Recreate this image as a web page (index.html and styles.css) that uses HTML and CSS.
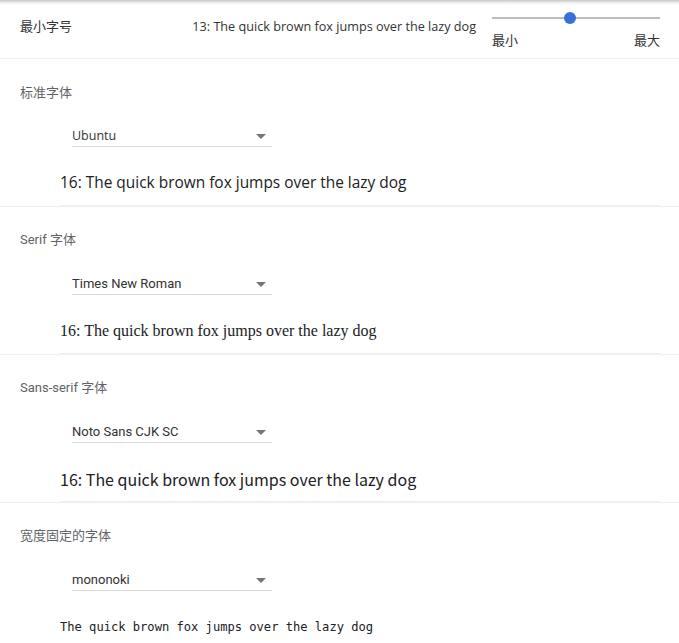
FILE: index.html
```html
<!DOCTYPE html>
<html lang="zh">
<head>
<meta charset="utf-8">
<link rel="stylesheet" href="styles.css">
</head>
<body>
<div class="page">
  <div class="toprow">
    <div class="toplabel">最小字号</div>
    <div class="topsample">13: The quick brown fox jumps over the lazy dog</div>
    <div class="slider">
      <div class="track"><div class="knob"></div></div>
      <div class="ticks"><span>最小</span><span>最大</span></div>
    </div>
  </div>

  <div class="section ubuntu">
    <div class="label">标准字体</div>
    <div class="select"><span class="seltext">Ubuntu</span><span class="arrow"></span></div>
    <div class="sample s-std">16: The quick brown fox jumps over the lazy dog</div>
  </div>

  <div class="section roboto">
    <div class="label">Serif 字体</div>
    <div class="select"><span class="seltext">Times New Roman</span><span class="arrow"></span></div>
    <div class="sample s-serif">16: The quick brown fox jumps over the lazy dog</div>
  </div>

  <div class="section roboto">
    <div class="label">Sans-serif 字体</div>
    <div class="select"><span class="seltext">Noto Sans CJK SC</span><span class="arrow"></span></div>
    <div class="sample s-sans">16: The quick brown fox jumps over the lazy dog</div>
  </div>

  <div class="section roboto">
    <div class="label">宽度固定的字体</div>
    <div class="select"><span class="seltext">mononoki</span><span class="arrow"></span></div>
    <div class="sample s-mono">The quick brown fox jumps over the lazy dog</div>
  </div>
</div>
</body>
</html>
```
FILE: styles.css
```css
html, body {
  margin: 0;
  padding: 0;
  background: #fff;
}
body {
  width: 679px;
  height: 643px;
  overflow: hidden;
  background: linear-gradient(to bottom, rgba(0,0,0,0.22), rgba(0,0,0,0.06) 3px, rgba(0,0,0,0) 5px) no-repeat #fff;
  font-family: "Open Sans", "Noto Sans CJK SC", sans-serif;
  color: #333;
}
.page {
  display: flex;
  flex-direction: column;
}
.toprow {
  height: 58px;
  display: flex;
  align-items: flex-start;
  padding: 0 19px 0 20px;
  font-family: "Open Sans", "Noto Sans CJK SC", sans-serif;
}
.toplabel {
  flex: 1;
  font-size: 13px;
  line-height: 20px;
  margin-top: 16px;
  color: #333;
}
.topsample {
  font-size: 12.65px;
  line-height: 20px;
  margin-top: 16px;
  color: #333;
  white-space: nowrap;
}
.slider {
  width: 168px;
  margin-left: 16px;
  display: flex;
  flex-direction: column;
}
.track {
  margin-top: 17px;
  height: 2px;
  background: #bdbdbd;
  position: relative;
}
.knob {
  position: absolute;
  left: 72px;
  top: -5px;
  width: 12px;
  height: 12px;
  border-radius: 50%;
  background: #3b6fd8;
}
.ticks {
  display: flex;
  justify-content: space-between;
  margin-top: 12px;
  font-size: 13px;
  line-height: 18px;
  color: #333;
  font-family: "Noto Sans CJK SC", sans-serif;
}
.section {
  border-top: 1px solid #efefef;
  padding: 23px 19px 0 20px;
  display: flex;
  flex-direction: column;
}
.label {
  font-size: 13px;
  line-height: 20px;
  color: #5f6368;
}
.ubuntu .label, .ubuntu .seltext {
  font-family: "Open Sans", "Noto Sans CJK SC", sans-serif;
}
.roboto .label, .roboto .seltext {
  font-family: Roboto, "Noto Sans CJK SC", sans-serif;
}
.select {
  margin: 22px 0 0 52px;
  width: 200px;
  height: 22px;
  border-bottom: 1px solid #dadada;
  display: flex;
  align-items: center;
  justify-content: space-between;
}
.seltext {
  font-size: 13px;
  line-height: 20px;
  padding-top: 2px;
  color: #333;
}
.ubuntu .seltext { font-size: 12.5px; }
.arrow {
  width: 0;
  height: 0;
  border-left: 5px solid transparent;
  border-right: 5px solid transparent;
  border-top: 5px solid #757575;
  margin-right: 6px;
  margin-top: 2px;
}
.sample {
  margin: 24px 0 0 40px;
  height: 24px;
  line-height: 24px;
  padding-bottom: 10px;
  border-bottom: 1px solid #efefef;
  color: #202124;
  white-space: nowrap;
}
.s-std {
  font-family: "Open Sans", sans-serif;
  font-size: 15.45px;
  margin-top: 23px;
  padding-bottom: 11px;
}
.s-serif {
  font-family: "Liberation Serif", serif;
  font-size: 16px;
}
.s-sans {
  font-family: "Noto Sans CJK SC", sans-serif;
  font-size: 16px;
}
.s-mono {
  font-family: "DejaVu Sans Mono", monospace;
  font-size: 12.1px;
}
.section:last-child .sample {
  border-bottom: none;
}
```
